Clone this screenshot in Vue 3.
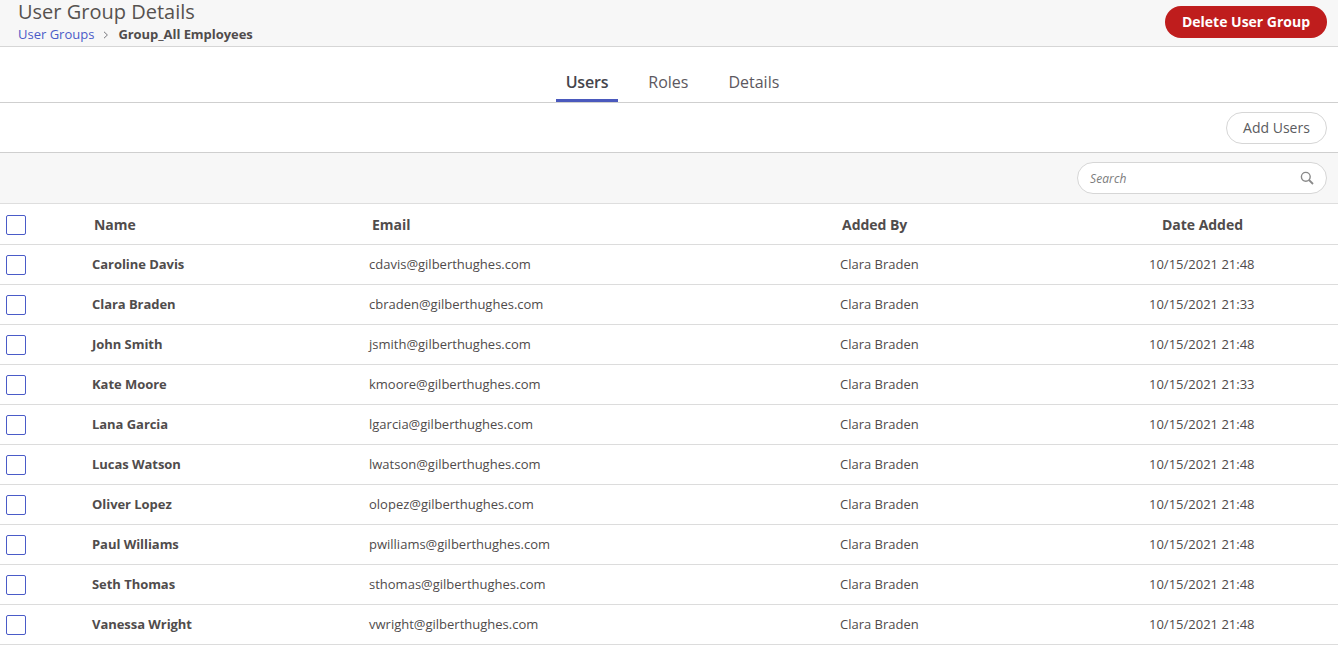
<script setup>
const users = [
  ['Caroline Davis', 'cdavis@gilberthughes.com', '10/15/2021 21:48'],
  ['Clara Braden', 'cbraden@gilberthughes.com', '10/15/2021 21:33'],
  ['John Smith', 'jsmith@gilberthughes.com', '10/15/2021 21:48'],
  ['Kate Moore', 'kmoore@gilberthughes.com', '10/15/2021 21:33'],
  ['Lana Garcia', 'lgarcia@gilberthughes.com', '10/15/2021 21:48'],
  ['Lucas Watson', 'lwatson@gilberthughes.com', '10/15/2021 21:48'],
  ['Oliver Lopez', 'olopez@gilberthughes.com', '10/15/2021 21:48'],
  ['Paul Williams', 'pwilliams@gilberthughes.com', '10/15/2021 21:48'],
  ['Seth Thomas', 'sthomas@gilberthughes.com', '10/15/2021 21:48'],
  ['Vanessa Wright', 'vwright@gilberthughes.com', '10/15/2021 21:48'],
]
</script>

<template>
  <div class="page">
    <header class="header">
      <div class="titles">
        <h1>User Group Details</h1>
        <div class="crumbs">
          <a>User Groups</a>
          <svg class="chev" width="6" height="8" viewBox="0 0 6 8"><path d="M1 .8 4.4 4 1 7.2" fill="none" stroke="#77777c" stroke-width="1" /></svg>
          <b>Group_All Employees</b>
        </div>
      </div>
      <button class="danger">Delete User Group</button>
    </header>

    <nav class="tabs">
      <span class="tab active">Users</span>
      <span class="tab">Roles</span>
      <span class="tab">Details</span>
    </nav>

    <div class="actions"><button class="outline">Add Users</button></div>

    <div class="searchbar">
      <div class="search">
        <span>Search</span>
        <svg width="14" height="14" viewBox="0 0 14 14"><circle cx="5.8" cy="5.8" r="4.4" fill="none" stroke="#8a8a8a" stroke-width="1.4" /><path d="M9 9l4 4" stroke="#8a8a8a" stroke-width="1.8" /></svg>
      </div>
    </div>

    <div class="row head">
      <i class="check"></i>
      <span>Name</span><span class="email-h">Email</span><span>Added By</span><span class="date">Date Added</span>
    </div>
    <div v-for="u in users" :key="u[1]" class="row body">
      <i class="check"></i>
      <b>{{ u[0] }}</b><span>{{ u[1] }}</span><span>Clara Braden</span><span>{{ u[2] }}</span>
    </div>
  </div>
</template>

<style scoped>
.page { width: 1338px; height: 666px; overflow: hidden; background: #fff; font-family: "Open Sans", sans-serif; color: #4f4b4b; font-size: 13px; }
.header { height: 46px; background: #f7f7f7; border-bottom: 1px solid #d6d6d6; display: flex; justify-content: space-between; align-items: flex-start; padding: 0 11px 0 18px; }
h1 { margin: 0; font-size: 20px; font-weight: 400; line-height: 24px; color: #56524f; }
.crumbs { display: flex; align-items: center; height: 20px; line-height: 20px; }
.crumbs a { color: #4a5bc8; }
.chev { margin: 1px 9px 0 9px; }
.crumbs b { font-weight: 700; color: #504c4c; letter-spacing: -0.05px; }
button { font-family: inherit; cursor: pointer; }
.danger { margin-top: 6px; height: 32px; width: 162px; padding: 0 0 2px; border: 0; border-radius: 16px; background: #bf1d1d; color: #fff; font-size: 14px; font-weight: 700; }
.tabs { height: 55px; border-bottom: 1px solid #cfcfcf; display: flex; justify-content: center; align-items: flex-end; gap: 20px; padding-left: 7px; }
.tab { padding: 0 10px; height: 33px; line-height: 26px; font-size: 16px; color: #5c5860; box-sizing: border-box; }
.tab.active { color: #45454c; font-weight: 600; letter-spacing: -0.2px; border-bottom: 3px solid #4a59bd; }
.actions { height: 49px; border-bottom: 1px solid #cfcfcf; display: flex; justify-content: flex-end; align-items: center; padding-right: 11px; }
.outline { height: 32px; width: 101px; padding: 0 0 2px; margin-top: 1px; border: 1px solid #d6d6d6; border-radius: 16px; background: #fff; color: #5b5b60; font-size: 14px; }
.searchbar { height: 50px; background: #f7f7f7; border-bottom: 1px solid #dedede; display: flex; justify-content: flex-end; align-items: center; padding-right: 11px; }
.search { width: 250px; height: 32px; box-sizing: border-box; border: 1px solid #d6d6d6; border-radius: 16px; background: #fff; display: flex; justify-content: space-between; align-items: center; padding: 0 12px; font-size: 12px; letter-spacing: 0.1px; font-style: italic; color: #7c7c7c; }
.row { height: 39px; border-bottom: 1px solid #dcdcdc; display: grid; grid-template-columns: 92px 277px 471px 309px 1fr; align-items: center; }
.body b, .body span { margin-bottom: 2px; }
.row b { font-weight: 700; color: #504c4c; letter-spacing: -0.05px; }
.head { height: 40px; font-size: 14px; font-weight: 700; color: #504c4c; }
.head span { padding-left: 2px; letter-spacing: -0.03px; }
.head .email-h { padding-left: 3px; }
.head .date { padding-left: 13px; }
.head .check { margin-top: 2px; }
.check { display: block; margin-left: 6px; width: 20px; height: 20px; box-sizing: border-box; border: 1px solid #4a5bc8; border-radius: 2px; background: #fff; }
</style>
